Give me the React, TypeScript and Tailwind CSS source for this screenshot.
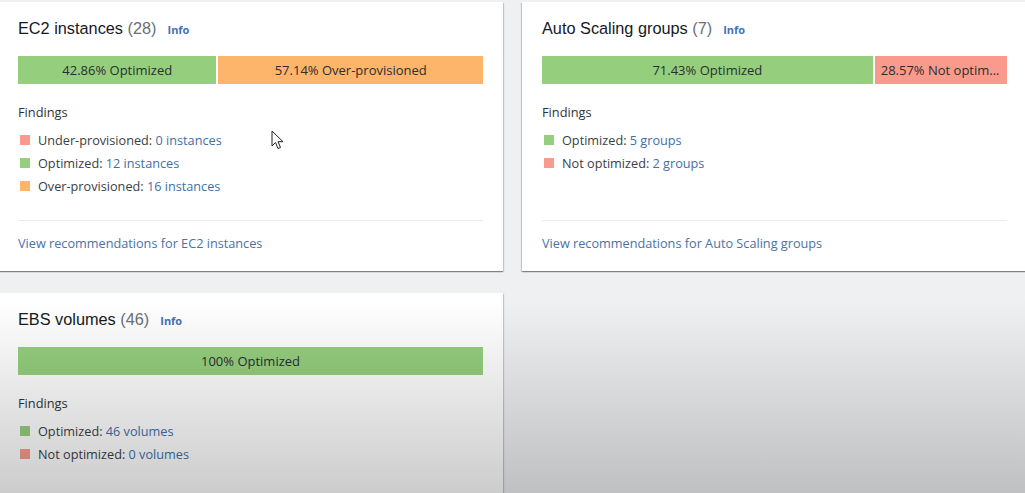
import React from "react";

type Segment = { pct: number; label: string; color: string };
type Finding = { label: string; value: string; color: string };

interface CardProps {
  title: string;
  count: number;
  segments: Segment[];
  findings: Finding[];
  link?: string;
}

const GREEN = "#95cf7e";
const ORANGE = "#fcb56a";
const RED = "#f99a8d";

function SummaryCard({ title, count, segments, findings, link }: CardProps) {
  return (
    <section className="bg-white shadow-[0_1px_1px_0_rgba(0,28,36,0.3),1px_1px_1px_0_rgba(0,28,36,0.15),-1px_1px_1px_0_rgba(0,28,36,0.15)] px-5 pt-[13px] pb-[19px]">
      {/* Header */}
      <div className="flex items-baseline h-[26px]">
        <h2
          className="text-[16.3px] text-[#16191f] leading-[26px]"
          style={{ fontFamily: '"Liberation Sans", Arial, sans-serif' }}
        >
          {title} <span className="text-[#687078]">({count})</span>
        </h2>
        <span className="ml-[11px] text-[11px] font-bold text-[#3f72b4]">Info</span>
      </div>

      {/* Bar */}
      <div className="mt-[15px] flex h-[28px] gap-[2px]">
        {segments.map((s) => (
          <div
            key={s.label}
            className="min-w-0 truncate px-[6px] text-center text-[13px] leading-[28px] text-[#2a2e33]"
            style={{ width: `${s.pct}%`, backgroundColor: s.color }}
          >
            {s.label}
          </div>
        ))}
      </div>

      {/* Findings */}
      <div className="mt-[19px] text-[12.8px] text-[#2f3338] leading-[18px]">Findings</div>
      <ul className="mt-[10px] flex flex-col gap-[5px] pl-[2px] h-[78px]">
        {findings.map((f) => (
          <li key={f.label} className="flex items-center text-[12.7px] leading-[18px] text-[#3b4046]">
            <span className="w-[10px] h-[10px] mr-[8px]" style={{ backgroundColor: f.color }} />
            <span>{f.label}:&nbsp;</span>
            <span className="text-[#4070a8]">{f.value}</span>
          </li>
        ))}
      </ul>

      {link && (
        <>
          <div className="mt-[11px] border-t border-[#eaeded]" />
          <div className="pt-[13px] text-[12.7px] leading-[18px] text-[#4a72a6]">{link}</div>
        </>
      )}
    </section>
  );
}

function Cursor() {
  return (
    <svg className="absolute left-[271px] top-[130px]" width="14" height="21" viewBox="0 0 14 21">
      <path
        d="M1 1 L1 16 L4.5 12.5 L7 18.5 L9.5 17.5 L7 11.7 L12 11.7 Z"
        fill="#fff"
        stroke="#222"
        strokeWidth="1"
        strokeLinejoin="round"
      />
    </svg>
  );
}

export default function App() {
  return (
    <div
      className="relative h-[493px] w-[1025px] overflow-hidden bg-[#eff0f2]"
      style={{ fontFamily: '"Open Sans", "Liberation Sans", sans-serif' }}
    >
      <div className="grid grid-cols-[505px_505px] gap-x-[19px] gap-y-[22px] ml-[-2px] pt-[2px]">
        <SummaryCard
          title="EC2 instances"
          count={28}
          segments={[
            { pct: 42.86, label: "42.86% Optimized", color: GREEN },
            { pct: 57.14, label: "57.14% Over-provisioned", color: ORANGE },
          ]}
          findings={[
            { label: "Under-provisioned", value: "0 instances", color: RED },
            { label: "Optimized", value: "12 instances", color: GREEN },
            { label: "Over-provisioned", value: "16 instances", color: ORANGE },
          ]}
          link="View recommendations for EC2 instances"
        />
        <SummaryCard
          title="Auto Scaling groups"
          count={7}
          segments={[
            { pct: 71.43, label: "71.43% Optimized", color: GREEN },
            { pct: 28.57, label: "28.57% Not optimized", color: RED },
          ]}
          findings={[
            { label: "Optimized", value: "5 groups", color: GREEN },
            { label: "Not optimized", value: "2 groups", color: RED },
          ]}
          link="View recommendations for Auto Scaling groups"
        />
        <SummaryCard
          title="EBS volumes"
          count={46}
          segments={[{ pct: 100, label: "100% Optimized", color: GREEN }]}
          findings={[
            { label: "Optimized", value: "46 volumes", color: GREEN },
            { label: "Not optimized", value: "0 volumes", color: RED },
          ]}
        />
      </div>

      <Cursor />

      {/* video vignette at the bottom */}
      <div className="pointer-events-none absolute inset-x-0 top-[300px] bottom-0 bg-gradient-to-b from-transparent to-black/20" />
    </div>
  );
}
